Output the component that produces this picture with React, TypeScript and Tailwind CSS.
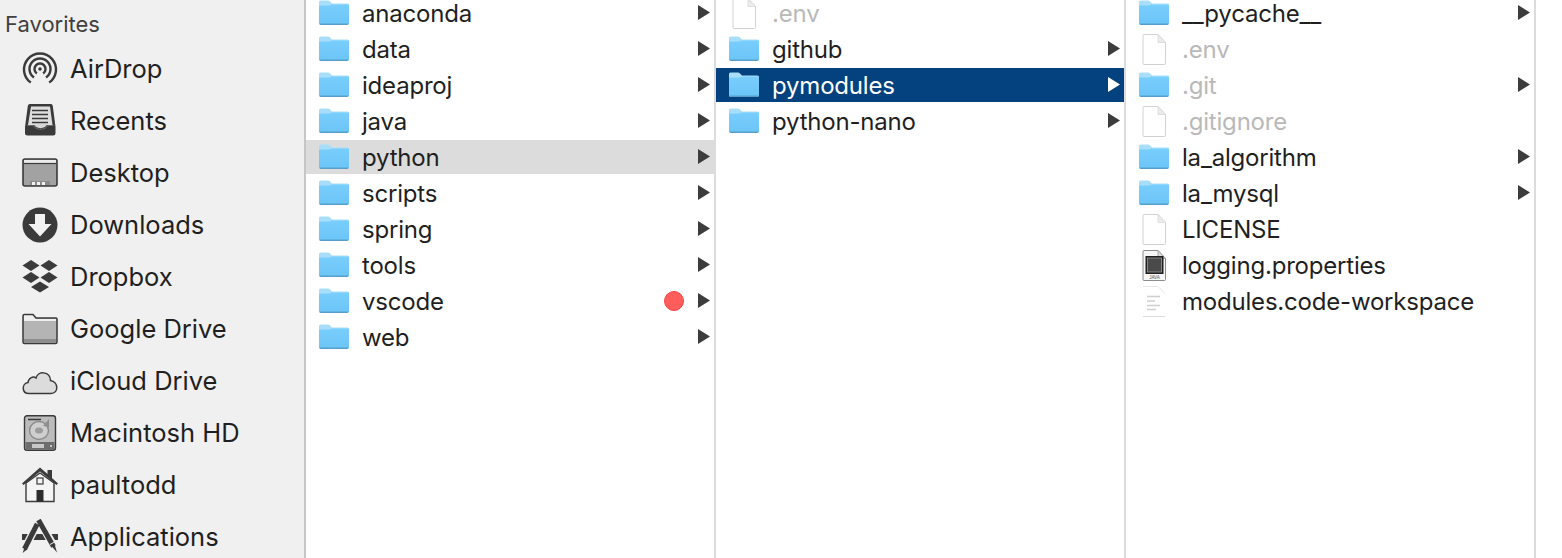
const INK = '#3a3a3a';

function AirDropIcon() {
  return (
    <svg width="36" height="36" viewBox="0 0 36 36" fill="none" stroke={INK} strokeWidth="2.4">
      <path d="M8.800 31.600A16 16 0 1 1 27.200 31.600" />
      <path d="M12 26.600A10.500 10.500 0 1 1 24 26.600" />
      <path d="M14.800 22.500A5.500 5.500 0 1 1 21.200 22.500" />
      <circle cx="18" cy="18" r="1.800" fill={INK} stroke="none" />
    </svg>
  );
}

function RecentsIcon() {
  return (
    <svg width="36" height="36" viewBox="0 0 36 36">
      <path d="M8 1H29Q30.500 1 30.800 3L33.500 24V30Q33.500 32.500 31 32.500H5.500Q3 32.500 3 30V24L5.800 3Q6 1 8 1Z" fill={INK} />
      <path d="M9 3.500H28L30.500 22H6Z" fill="#dedede" />
      <path d="M10 7.500H26M10 11.500H26M10 15.500H26M10 19.500H26" stroke={INK} strokeWidth="1.600" />
      <path d="M12 21C13 26.500 24 26.500 25 21Z" fill="#d6d6d6" />
      <path d="M5 22.500H11.500C13 27.500 24 27.500 25.500 22.500H31.500" fill="none" stroke="#777777" strokeWidth="0.800" />
    </svg>
  );
}

function DesktopIcon() {
  return (
    <svg width="36" height="36" viewBox="0 0 36 36">
      <rect x="1" y="4" width="34" height="27" rx="2" fill="#a2a2a2" stroke={INK} strokeWidth="1.600" />
      <path d="M2 5H34V8H2Z" fill="#ececec" />
      <path d="M2 8.500H34" stroke={INK} strokeWidth="1.200" />
      <path d="M8 30V26H28V30Z" fill="#8a8a8a" />
      <path d="M10 27H13V30H10ZM15 27H18V30H15ZM20 27H23V30H20Z" fill="#f2f2f2" />
    </svg>
  );
}

function DownloadsIcon() {
  return (
    <svg width="36" height="36" viewBox="0 0 36 36">
      <circle cx="18" cy="18" r="17.500" fill={INK} />
      <path d="M13 7H23V17H29.500L18 29.500L6.500 17H13Z" fill="#f2f2f2" />
    </svg>
  );
}

function DropboxIcon() {
  return (
    <svg width="36" height="36" viewBox="0 0 36 36" fill={INK}>
      <path d="M9 1L17.500 6.500L9 12L0.500 6.500Z" />
      <path d="M27 1L35.500 6.500L27 12L18.500 6.500Z" />
      <path d="M9 13L17.500 18.500L9 24L0.500 18.500Z" />
      <path d="M27 13L35.500 18.500L27 24L18.500 18.500Z" />
      <path d="M18 22.500L27 28L18 33.500L9 28Z" />
    </svg>
  );
}

function DriveIcon() {
  return (
    <svg width="36" height="36" viewBox="0 0 36 36">
      <path d="M1 5Q1 3.500 2.500 3.500H11L14 7H34Q35 7 35 8V31Q35 32.500 33.500 32.500H2.500Q1 32.500 1 31Z" fill="#b4b4b4" stroke={INK} strokeWidth="1.500" />
      <path d="M2 4.500H10.500L13.500 8H34V10H2Z" fill="#efefef" />
      <path d="M2 28H34V31.500H2Z" fill="#8d8d8d" />
    </svg>
  );
}

function CloudIcon() {
  return (
    <svg width="36" height="36" viewBox="0 0 36 36">
      <path d="M7 30.500C-0.500 30.500 -0.500 20.500 6 19.500C6.500 14.500 11.500 13 14 15C16 7.500 28 8 28.500 17.500C36.500 18.500 37 30.500 29 30.500Z" fill="#dcdcdc" stroke={INK} strokeWidth="1.500" />
    </svg>
  );
}

function DiskIcon() {
  return (
    <svg width="36" height="36" viewBox="0 0 36 36">
      <rect x="2.500" y="0.800" width="31" height="34.400" rx="2.500" fill="#bcbcbc" stroke={INK} strokeWidth="1.400" />
      <path d="M3.500 27H32.500V32Q32.500 34.500 30 34.500H6Q3.500 34.500 3.500 32Z" fill="#6d6d6d" />
      <path d="M10 29H22V33H10Z" fill="#c8c8c8" />
      <path d="M6 4.500H19" stroke={INK} strokeWidth="1.500" />
      <ellipse cx="17" cy="15.500" rx="9.500" ry="9" fill="#cfcfcf" stroke="#8a8a8a" strokeWidth="1.400" />
      <path d="M27 4L21 11L27 12Z" fill="#8e8e8e" />
      <ellipse cx="17" cy="15.500" rx="4" ry="3" fill="#9c9c9c" />
      <circle cx="29" cy="31" r="1" fill="#e5e5e5" />
    </svg>
  );
}

function HomeIcon() {
  return (
    <svg width="36" height="36" viewBox="0 0 36 36">
      <path d="M4 16V34.500H32V16L18 6Z" fill="#f4f4f4" stroke={INK} strokeWidth="1.400" />
      <path d="M0 16.500L18 0.500L25.500 7V3H30V11L36 16.500L34.500 18L18 4.500L1.500 18Z" fill={INK} />
      <rect x="15" y="11" width="6" height="6" fill="#f4f4f4" stroke={INK} strokeWidth="1.200" />
      <rect x="14.500" y="23" width="7" height="11.500" fill="#2c2c2c" />
    </svg>
  );
}

function AppsIcon() {
  return (
    <svg width="36" height="36" viewBox="0 0 36 36">
      <path d="M0 15H36V21H0Z" fill={INK} />
      <path d="M15 5.500L1 33" stroke="#f0f0f0" strokeWidth="8" />
      <path d="M16.500 0L34.500 32" stroke="#f0f0f0" strokeWidth="8" />
      <path d="M15.200 5L2.500 30" stroke={INK} strokeWidth="5" />
      <path d="M2.500 28L0.700 34L5.500 30Z" fill={INK} />
      <path d="M16.500 1L31.500 27.500" stroke={INK} strokeWidth="5" />
      <path d="M29.500 27L32.500 25L35 33.500Z" fill={INK} />
      <path d="M28 25.500L32.500 23" stroke="#f0f0f0" strokeWidth="1" />
    </svg>
  );
}

function FolderIcon({ id }: { id: string }) {
  return (
    <svg width="30" height="25" viewBox="0 0 30 25" className="mb-[2px] shrink-0">
      <defs>
        <linearGradient id={id} x1="0" y1="0" x2="0" y2="1">
          <stop offset="0" stopColor="#78cefc" />
          <stop offset="1" stopColor="#6cc5f8" />
        </linearGradient>
      </defs>
      <path d="M0 2Q0 0.500 1.500 0.500H9Q10 0.500 11 1.500L13 3.500H28.500Q30 3.500 30 5V23Q30 25 28 25H2Q0 25 0 23Z" fill="#a9def9" />
      <path d="M0 6.500Q0 5.500 1 5.500H10L12.500 4.500H29Q30 4.500 30 5.500V23Q30 24.500 28.500 24.500H1.500Q0 24.500 0 23Z" fill={`url(#${id})`} />
      <path d="M0.500 23.500H29.500V24Q29 25 28 25H2Q1 25 0.500 24Z" fill="#579fca" />
    </svg>
  );
}

function FileIcon() {
  return (
    <svg width="24" height="31" viewBox="0 0 24 31" className="shrink-0">
      <path d="M1 1.500Q1 0.500 2 0.500H16L23.500 8.500V29.500Q23.500 30.500 22.500 30.500H2Q1 30.500 1 29.500Z" fill="#ffffff" stroke="#d2d2d2" strokeWidth="1" />
      <path d="M16 0.500V8.500H23.500Z" fill="#ececec" stroke="#d8d8d8" strokeWidth="0.800" />
    </svg>
  );
}

function JavaFileIcon() {
  return (
    <svg width="24" height="31" viewBox="0 0 24 31" className="shrink-0">
      <path d="M1 1.500Q1 0.500 2 0.500H16L23.500 8.500V29.500Q23.500 30.500 22.500 30.500H2Q1 30.500 1 29.500Z" fill="#f6f6f6" stroke="#8c8c8c" strokeWidth="1" />
      <path d="M16 0.500V8.500H23.500Z" fill="#dddddd" stroke="#9a9a9a" strokeWidth="0.800" />
      <rect x="3.500" y="6" width="18" height="18" fill="#1f1f1f" />
      <rect x="5.500" y="8" width="14" height="14" fill="#4a4a4a" stroke="#999999" strokeWidth="0.800" />
      <text x="12.500" y="28.800" textAnchor="middle" fontSize="4.500" fontFamily="Liberation Sans, sans-serif" fill="#555555">JAVA</text>
    </svg>
  );
}

function CodeFileIcon() {
  return (
    <svg width="24" height="31" viewBox="0 0 24 31" className="shrink-0">
      <path d="M1 0.500H16L23 7.500" fill="none" stroke="#e6e6e6" strokeWidth="1" />
      <path d="M1 30.500H23" fill="none" stroke="#dddddd" strokeWidth="1" />
      <path d="M5 10.500H18M5 15H13M5 19.500H18M5 23.500H14" stroke="#cfcfcf" strokeWidth="1.300" />
    </svg>
  );
}

type EntryKind = 'folder' | 'file' | 'java' | 'code';

interface Entry {
  name: string;
  kind: EntryKind;
  hidden?: boolean;
  selected?: 'blue' | 'gray';
  tagged?: boolean;
}

const favorites = [
  { name: 'AirDrop', icon: <AirDropIcon /> },
  { name: 'Recents', icon: <RecentsIcon /> },
  { name: 'Desktop', icon: <DesktopIcon /> },
  { name: 'Downloads', icon: <DownloadsIcon /> },
  { name: 'Dropbox', icon: <DropboxIcon /> },
  { name: 'Google Drive', icon: <DriveIcon /> },
  { name: 'iCloud Drive', icon: <CloudIcon /> },
  { name: 'Macintosh HD', icon: <DiskIcon /> },
  { name: 'paultodd', icon: <HomeIcon /> },
  { name: 'Applications', icon: <AppsIcon /> },
];

const firstColumn: Entry[] = [
  { name: 'anaconda', kind: 'folder' },
  { name: 'data', kind: 'folder' },
  { name: 'ideaproj', kind: 'folder' },
  { name: 'java', kind: 'folder' },
  { name: 'python', kind: 'folder', selected: 'gray' },
  { name: 'scripts', kind: 'folder' },
  { name: 'spring', kind: 'folder' },
  { name: 'tools', kind: 'folder' },
  { name: 'vscode', kind: 'folder', tagged: true },
  { name: 'web', kind: 'folder' },
];

const secondColumn: Entry[] = [
  { name: '.env', kind: 'file', hidden: true },
  { name: 'github', kind: 'folder' },
  { name: 'pymodules', kind: 'folder', selected: 'blue' },
  { name: 'python-nano', kind: 'folder' },
];

const thirdColumn: Entry[] = [
  { name: '__pycache__', kind: 'folder' },
  { name: '.env', kind: 'file', hidden: true },
  { name: '.git', kind: 'folder', hidden: true },
  { name: '.gitignore', kind: 'file', hidden: true },
  { name: 'la_algorithm', kind: 'folder' },
  { name: 'la_mysql', kind: 'folder' },
  { name: 'LICENSE', kind: 'file' },
  { name: 'logging.properties', kind: 'java' },
  { name: 'modules.code-workspace', kind: 'code' },
];

function EntryRow({ entry, id }: { entry: Entry; id: string }) {
  const isBlue = entry.selected === 'blue';
  const rowBg = isBlue ? 'bg-[#03417f]' : entry.selected === 'gray' ? 'bg-[#dcdcdc]' : '';
  const textColor = isBlue ? 'text-white' : entry.hidden ? 'text-[#b9b9b9]' : 'text-[#1f1f1f]';

  return (
    <div className={`flex h-[34px] items-center pl-[13px] pr-[4px] ${rowBg}`}>
      <div className="flex w-[43px] shrink-0">
        {entry.kind === 'folder' && <FolderIcon id={id} />}
        {entry.kind === 'file' && <div className="pl-[3px]"><FileIcon /></div>}
        {entry.kind === 'java' && <div className="pl-[3px]"><JavaFileIcon /></div>}
        {entry.kind === 'code' && <div className="pl-[3px]"><CodeFileIcon /></div>}
      </div>
      <span className={`mt-[2px] flex-1 text-[24px] leading-none tracking-[-0.2px] ${textColor}`}>{entry.name}</span>
      {entry.tagged && (
        <span className="mr-[14px] h-[20px] w-[20px] rounded-full border border-[#f54545] bg-[#ff5c5c]" />
      )}
      {entry.kind === 'folder' && (
        <svg width="12" height="15" viewBox="0 0 12 15" className="mb-[2px] shrink-0">
          <path d="M0 0L12 7.500L0 15Z" fill={isBlue ? '#ffffff' : '#3c3c3c'} />
        </svg>
      )}
    </div>
  );
}

function Column({ entries, name }: { entries: Entry[]; name: string }) {
  return (
    <div className="h-full w-[410px] shrink-0 overflow-hidden border-r-2 border-[#dcdcdc] bg-white">
      <div className="-mt-[4px] flex flex-col gap-[2px]">
        {entries.map((entry) => (
          <EntryRow key={entry.name} entry={entry} id={`${name}-${entry.name}`} />
        ))}
      </div>
    </div>
  );
}

export default function App() {
  return (
    <div
      className="flex h-[558px] w-full overflow-hidden bg-white"
      style={{ fontFamily: 'Inter, "Liberation Sans", sans-serif' }}
    >
      <aside className="h-full w-[306px] shrink-0 overflow-hidden border-r-2 border-[#c6c6c6] bg-[#f0f0f0]">
        <div className="pl-[5px] pt-[12px] text-[22px] leading-[24px] text-[#3f3f3f]">Favorites</div>
        <div className="mt-[7px] flex flex-col">
          {favorites.map((item) => (
            <div key={item.name} className="flex h-[52px] items-center pl-[22px]">
              <div className="w-[48px] shrink-0">{item.icon}</div>
              <span className="text-[25.5px] leading-none text-[#1f1f1f]">{item.name}</span>
            </div>
          ))}
        </div>
      </aside>
      <Column entries={firstColumn} name="a" />
      <Column entries={secondColumn} name="b" />
      <Column entries={thirdColumn} name="c" />
    </div>
  );
}
